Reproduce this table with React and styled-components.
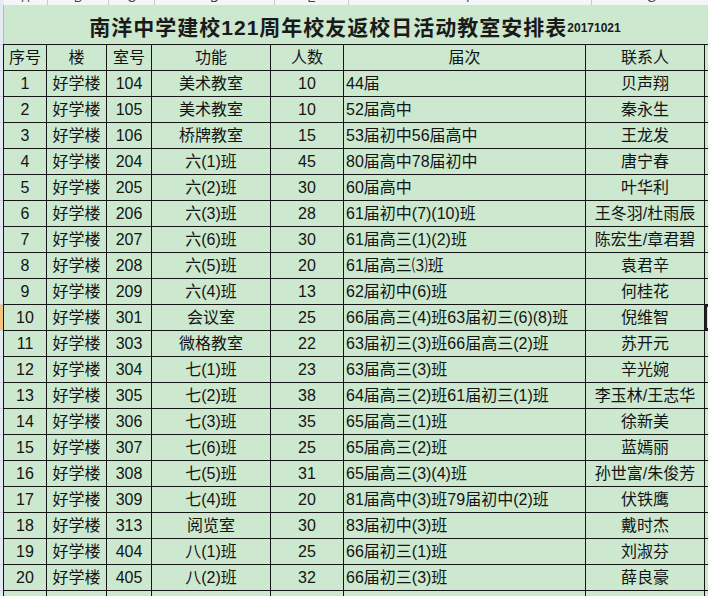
import React from 'react'
import styled, { createGlobalStyle } from 'styled-components'

const GlobalStyle = createGlobalStyle`
  html, body {
    margin: 0;
    padding: 0;
    background: #cce8cf;
    overflow: hidden;
  }
`;

const COLS = [42, 59, 44, 118, 72, 241, 118];
const LETTERS = ['A', 'B', 'C', 'D', 'E', 'F', 'G'];
const HEAD = ['序号', '楼', '室号', '功能', '人数', '届次', '联系人'];

const rows = [
  ['104', '美术教室', '10', '44届', '贝声翔'],
  ['105', '美术教室', '10', '52届高中', '秦永生'],
  ['106', '桥牌教室', '15', '53届初中56届高中', '王龙发'],
  ['204', '六(1)班', '45', '80届高中78届初中', '唐宁春'],
  ['205', '六(2)班', '30', '60届高中', '叶华利'],
  ['206', '六(3)班', '28', '61届初中(7)(10)班', '王冬羽/杜雨辰'],
  ['207', '六(6)班', '30', '61届高三(1)(2)班', '陈宏生/章君碧'],
  ['208', '六(5)班', '20', '61届高三⑶班', '袁君辛'],
  ['209', '六(4)班', '13', '62届初中(6)班', '何桂花'],
  ['301', '会议室', '25', '66届高三(4)班63届初三(6)(8)班', '倪维智'],
  ['303', '微格教室', '22', '63届初三(3)班66届高三(2)班', '苏开元'],
  ['304', '七(1)班', '23', '63届高三(3)班', '辛光婉'],
  ['305', '七(2)班', '38', '64届高三(2)班61届初三(1)班', '李玉林/王志华'],
  ['306', '七(3)班', '35', '65届高三(1)班', '徐新美'],
  ['307', '七(6)班', '25', '65届高三(2)班', '蓝嫣丽'],
  ['308', '七(5)班', '31', '65届高三(3)(4)班', '孙世富/朱俊芳'],
  ['309', '七(4)班', '20', '81届高中(3)班79届初中(2)班', '伏铁鹰'],
  ['313', '阅览室', '30', '83届初中(3)班', '戴时杰'],
  ['404', '八(1)班', '25', '66届初三(1)班', '刘淑芬'],
  ['405', '八(2)班', '32', '66届初三(3)班', '薛良豪'],
];

const SELECTED_ROW = 10;

const Page = styled.div`
  width: 708px;
  height: 596px;
  overflow: hidden;
  display: flex;
  flex-direction: column;
  font-family: "Liberation Sans", "Noto Sans CJK SC", sans-serif;
  color: #141414;
`;

const ColumnBar = styled.div`
  display: flex;
  height: 5px;
  flex: none;
  background: #f4f5f7;
`;

const Corner = styled.div`
  width: 4px;
  flex: none;
  background: #e6ebf2;
`;

const ColumnHead = styled.div`
  width: ${p => p.$w}px;
  flex: none;
  overflow: hidden;
  border-right: 1px solid #c5cbd3;
  text-align: center;
  font-size: 12px;
  line-height: 16px;
  color: #444;
  background: ${p => (p.$active ? '#f8d79c' : 'transparent')};
  box-shadow: ${p => (p.$active ? 'inset 0 -1px 0 #f0a030' : 'none')};

  span {
    display: block;
    margin-top: -10px;
  }
`;

const Body = styled.div`
  display: flex;
  flex: 1;
`;

const RowBar = styled.div`
  width: 3px;
  flex: none;
  display: flex;
  flex-direction: column;
  background: #e4eaf3;
`;

const RowHead = styled.div`
  height: ${p => p.$h}px;
  flex: none;
  border-bottom: 1px solid #c9d2de;
  background: ${p => (p.$active ? '#f7c27c' : 'transparent')};
`;

const Sheet = styled.div`
  flex: 1;
  display: flex;
  flex-direction: column;
`;

const Title = styled.div`
  height: 39px;
  flex: none;
  border-left: 1px solid #a9bcd3;
  display: flex;
  align-items: center;
  justify-content: center;
  padding-right: 2px;
  padding-top: 3px;
  box-sizing: border-box;
  font-weight: bold;
  font-size: 21px;
  letter-spacing: 1px;
  color: #1a1a1a;

  small {
    font-size: 12px;
    font-weight: bold;
    letter-spacing: 0;
    align-self: flex-end;
    margin-bottom: 9px;
  }
`;

const Grid = styled.div`
  display: grid;
  grid-template-columns: ${COLS.map(w => `${w}px`).join(' ')} 1fr;
  grid-auto-rows: 25px;
  gap: 1px;
  padding: 1px 0 0 1px;
  background: #151515;
  flex: 1;
  align-content: start;
`;

const Cell = styled.div`
  background: #cce8cf;
  font-size: 16px;
  line-height: 25px;
  white-space: nowrap;
  overflow: hidden;
  text-align: ${p => (p.$left ? 'left' : 'center')};
  padding-left: ${p => (p.$left ? '2px' : '0')};
`;

const Spill = styled.div`
  background: #cce8cf;
  box-shadow: ${p => (p.$selected ? 'inset 2px 2px 0 #222, inset 0 -2px 0 #222' : 'none')};
`;

export default function App() {
  return (
    <>
      <GlobalStyle />
      <Page>
        <ColumnBar>
          <Corner />
          {COLS.map((w, i) => (
            <ColumnHead key={i} $w={w + 1}>
              <span>{LETTERS[i]}</span>
            </ColumnHead>
          ))}
          <ColumnHead $w={4} $active />
        </ColumnBar>
        <Body>
          <RowBar>
            <RowHead $h={39} />
            <RowHead $h={25} />
            {rows.map((_, i) => (
              <RowHead key={i} $h={25} $active={i + 1 === SELECTED_ROW} />
            ))}
            <RowHead $h={25} />
          </RowBar>
          <Sheet>
            <Title>
              南洋中学建校121周年校友返校日活动教室安排表<small>20171021</small>
            </Title>
            <Grid>
              {HEAD.map(h => (
                <Cell key={h}>{h}</Cell>
              ))}
              <Spill />
              {rows.map((r, i) => (
                <React.Fragment key={i}>
                  <Cell>{i + 1}</Cell>
                  <Cell>好学楼</Cell>
                  <Cell>{r[0]}</Cell>
                  <Cell>{r[1]}</Cell>
                  <Cell>{r[2]}</Cell>
                  <Cell $left>{r[3]}</Cell>
                  <Cell>{r[4]}</Cell>
                  <Spill $selected={i + 1 === SELECTED_ROW} />
                </React.Fragment>
              ))}
              {COLS.map((_, i) => (
                <Cell key={`e${i}`} />
              ))}
              <Spill />
            </Grid>
          </Sheet>
        </Body>
      </Page>
    </>
  );
}
